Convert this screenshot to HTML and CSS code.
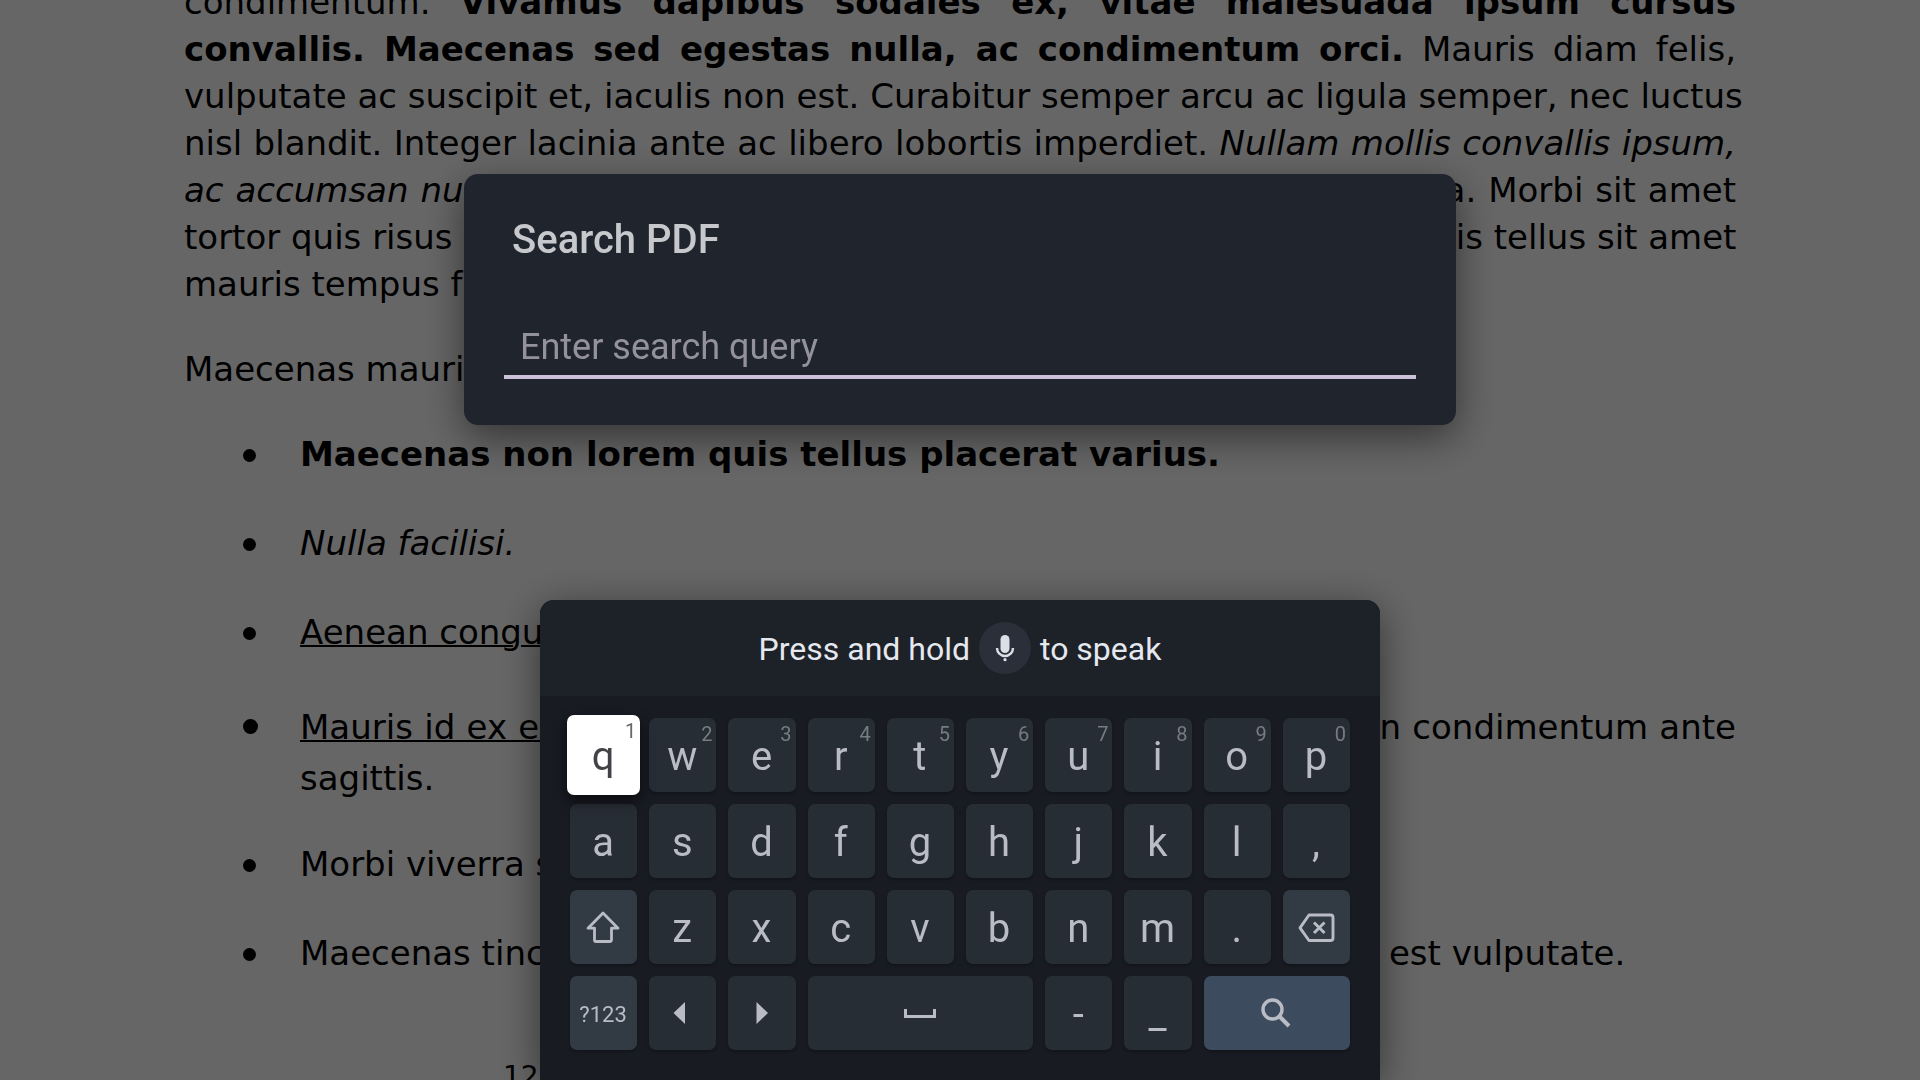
FILE: index.html
```html
<!DOCTYPE html>
<html lang="en">
<head>
<meta charset="utf-8">
<title>Search PDF</title>
<link rel="stylesheet" href="styles.css">
</head>
<body>
<main class="document">
  <p class="para para-set">condimentum. <b>Vivamus dapibus sodales ex, vitae malesuada ipsum cursus<br>convallis. Maecenas sed egestas nulla, ac condimentum orci.</b> Mauris diam felis,<br>vulputate ac suscipit et, iaculis non est. Curabitur semper arcu ac ligula semper, nec luctus<br>nisl blandit. Integer lacinia ante ac libero lobortis imperdiet. <i>Nullam mollis convallis ipsum,<br>ac accumsan nunc vehicula vitae.</i> Nulla eget justo in felis tristique fringilla. Morbi sit amet<br>tortor quis risus auctor condimentum. Morbi in ullamcorper elit. Nulla iaculis tellus sit amet<span class="last-line">mauris tempus fringilla.</span></p>
  <p class="para">Maecenas mauris lectus, lobortis et purus mattis, blandit dictum tellus.</p>
  <ul class="list">
    <li class="item"><b>Maecenas non lorem quis tellus placerat varius.</b></li>
    <li class="item"><i>Nulla facilisi.</i></li>
    <li class="item"><u>Aenean congue fringilla justo ut aliquam.</u></li>
    <li class="item item-wide"><u>Mauris id ex erat.</u> Nunc vulputate neque vitae justo facilisis, non condimentum ante sagittis.</li>
    <li class="item">Morbi viverra semper lorem nec molestie.</li>
    <li class="item">Maecenas tincidunt est efficitur ligula euismod, sit amet ornare est vulputate.</li>
  </ul>
  <p class="axis">12</p>
</main>

<div class="scrim">
  <section class="dialog" role="dialog" aria-labelledby="dialog-title">
    <h1 class="dialog-title" id="dialog-title">Search PDF</h1>
    <input class="query" type="text" placeholder="Enter search query" aria-labelledby="dialog-title">
  </section>

  <section class="keyboard" aria-label="Keyboard">
    <header class="voice">
      <span class="voice-text">Press and hold</span>
      <span class="mic"><svg width="52" height="52" viewBox="0 0 52 52" aria-hidden="true"><rect x="21.500" y="13" width="9" height="18" rx="4.500" fill="#dcdfe6"/><path d="M18 26a8 8 0 0 0 16 0" fill="none" stroke="#dcdfe6" stroke-width="2.400"/><circle cx="26" cy="37.700" r="1.600" fill="#dcdfe6"/></svg></span>
      <span class="voice-text">to speak</span>
    </header>
    <div class="keys">
      <button class="key focused">q<span class="hint">1</span></button>
      <button class="key">w<span class="hint">2</span></button>
      <button class="key">e<span class="hint">3</span></button>
      <button class="key">r<span class="hint">4</span></button>
      <button class="key">t<span class="hint">5</span></button>
      <button class="key">y<span class="hint">6</span></button>
      <button class="key">u<span class="hint">7</span></button>
      <button class="key">i<span class="hint">8</span></button>
      <button class="key">o<span class="hint">9</span></button>
      <button class="key">p<span class="hint">0</span></button>

      <button class="key">a</button>
      <button class="key">s</button>
      <button class="key">d</button>
      <button class="key">f</button>
      <button class="key">g</button>
      <button class="key">h</button>
      <button class="key">j</button>
      <button class="key">k</button>
      <button class="key">l</button>
      <button class="key">,</button>

      <button class="key special" aria-label="Shift"><svg width="36" height="36" viewBox="0 0 36 36"><path d="M18 4 3 19.200h6.500V31a1.500 1.500 0 0 0 1.500 1.500h14a1.500 1.500 0 0 0 1.500-1.500V19.200H33Z" fill="none" stroke="currentColor" stroke-width="2.800" stroke-linejoin="round"/></svg></button>
      <button class="key">z</button>
      <button class="key">x</button>
      <button class="key">c</button>
      <button class="key">v</button>
      <button class="key">b</button>
      <button class="key">n</button>
      <button class="key">m</button>
      <button class="key">.</button>
      <button class="key special" aria-label="Backspace"><svg width="40" height="40" viewBox="0 0 40 40"><path d="M13 8h21.500a2.500 2.500 0 0 1 2.500 2.500v20.500a2.500 2.500 0 0 1-2.500 2.500H13L4 20.800Z M18 15.500l10.500 10.500M28.500 15.500 18 26" fill="none" stroke="currentColor" stroke-width="2.900" stroke-linejoin="round"/></svg></button>

      <button class="key special small">?123</button>
      <button class="key" aria-label="Move left"><svg width="24" height="24" viewBox="0 0 24 24"><path d="M15 1v22L3.500 12Z" fill="currentColor"/></svg></button>
      <button class="key" aria-label="Move right"><svg width="24" height="24" viewBox="0 0 24 24"><path d="M7.500 1v22l11.500-11Z" fill="currentColor"/></svg></button>
      <button class="key space" aria-label="Space"><svg width="32" height="10" viewBox="0 0 32 10"><path d="M1.500 1v7.500h29V1" fill="none" stroke="currentColor" stroke-width="3"/></svg></button>
      <button class="key">-</button>
      <button class="key">_</button>
      <button class="key search" aria-label="Search"><svg width="32" height="32" viewBox="0 0 32 32"><circle cx="12.500" cy="12.500" r="9.500" fill="none" stroke="currentColor" stroke-width="3.400"/><path d="m19 19 10 10" fill="none" stroke="currentColor" stroke-width="4"/></svg></button>
    </div>
  </section>
</div>
</body>
</html>
```
FILE: styles.css
```css
* {
  box-sizing: border-box;
}

body {
  margin: 0;
  height: 100vh;
  overflow: hidden;
  background: #fff;
}

.document {
  margin-top: -21px;
  padding: 0 184px;
  font-family: "DejaVu Sans", sans-serif;
  font-size: 34px;
  line-height: 47px;
  color: #000;
}

.para {
  margin: 0 0 38px;
  text-align: justify;
}

/* Keeps the page's own line breaks, each line filled to the margin */
.para-set {
  text-align-last: justify;
  white-space: nowrap;
}

.last-line {
  display: block;
  text-align-last: left;
}

.list {
  margin: 0;
  padding: 0 0 0 116px;
  list-style: none;
}

.item {
  position: relative;
  margin-bottom: 42px;
  text-align: justify;
}

.item::before {
  content: "";
  position: absolute;
  left: -57px;
  top: 18px;
  width: 13px;
  height: 13px;
  border-radius: 50%;
  background: #000;
}

.item-wide {
  margin-bottom: 37px;
  padding-top: 4px;
  line-height: 51px;
}

.item-wide::before {
  top: 21px;
  width: 15px;
  height: 15px;
}

u {
  text-decoration-thickness: 2px;
}

.axis {
  margin: 76px 0 0 319px;
  font-size: 28px;
}

/* Dims the document behind the dialog and keyboard */
.scrim {
  position: fixed;
  inset: 0;
  display: flex;
  flex-direction: column;
  align-items: center;
  justify-content: space-between;
  padding-top: 174px;
  background: rgba(0, 0, 0, 0.6);
  font-family: Roboto, sans-serif;
}

.dialog {
  width: 992px;
  max-width: 90%;
  padding: 41px 40px 46px;
  border-radius: 14px;
  background: #20242d;
  box-shadow: 0 12px 40px rgba(0, 0, 0, 0.5);
}

.dialog-title {
  margin: 0 8px 43px;
  font-size: 40px;
  line-height: 50px;
  font-weight: 500;
  color: #c6c8cc;
}

.query {
  display: block;
  width: 100%;
  height: 71px;
  padding: 13px 16px 3px;
  border: 0;
  border-bottom: 4px solid #cbc2da;
  outline: 0;
  background: none;
  font: 36px/48px Roboto, sans-serif;
  color: #e3e3e8;
}

.query::placeholder {
  color: #93929c;
  opacity: 1;
}

.keyboard {
  width: 840px;
  max-width: 100%;
  overflow: hidden;
  border-radius: 14px 14px 0 0;
  background: #191b23;
  box-shadow: 0 8px 40px rgba(0, 0, 0, 0.5);
}

.voice {
  display: flex;
  align-items: center;
  justify-content: center;
  gap: 9px;
  height: 96px;
  background: #1d2128;
  font-size: 32px;
  color: #e6e8ef;
}

.voice-text {
  padding-top: 2px;
}

.mic {
  display: flex;
  border-radius: 50%;
  background: #2a2f3a;
}

.keys {
  display: grid;
  grid-template-columns: repeat(10, 1fr);
  grid-auto-rows: 74px;
  gap: 12px;
  padding: 22px 30px 30px;
}

.key {
  position: relative;
  display: flex;
  align-items: center;
  justify-content: center;
  min-width: 0;
  padding: 2px 1px 0 0;
  border: 0;
  border-radius: 7px;
  background: #272d35;
  box-shadow: 0 2px 3px rgba(0, 0, 0, 0.25);
  font: 40px Roboto, sans-serif;
  color: #b9bcc5;
}

.key svg {
  margin-bottom: 2px;
}

.hint {
  position: absolute;
  top: 4px;
  right: 4px;
  font-size: 20px;
  line-height: 24px;
  color: #777c84;
}

.focused {
  z-index: 1;
  margin: -3px;
  background: #fff;
  box-shadow: 0 6px 14px rgba(0, 0, 0, 0.6);
  color: #424346;
}

.focused .hint {
  color: #66676a;
}

.special {
  background: #323b44;
}

.small {
  font-size: 22px;
}

.space {
  grid-column: span 3;
}

.search {
  grid-column: span 2;
  background: #3c4b5e;
}
```
